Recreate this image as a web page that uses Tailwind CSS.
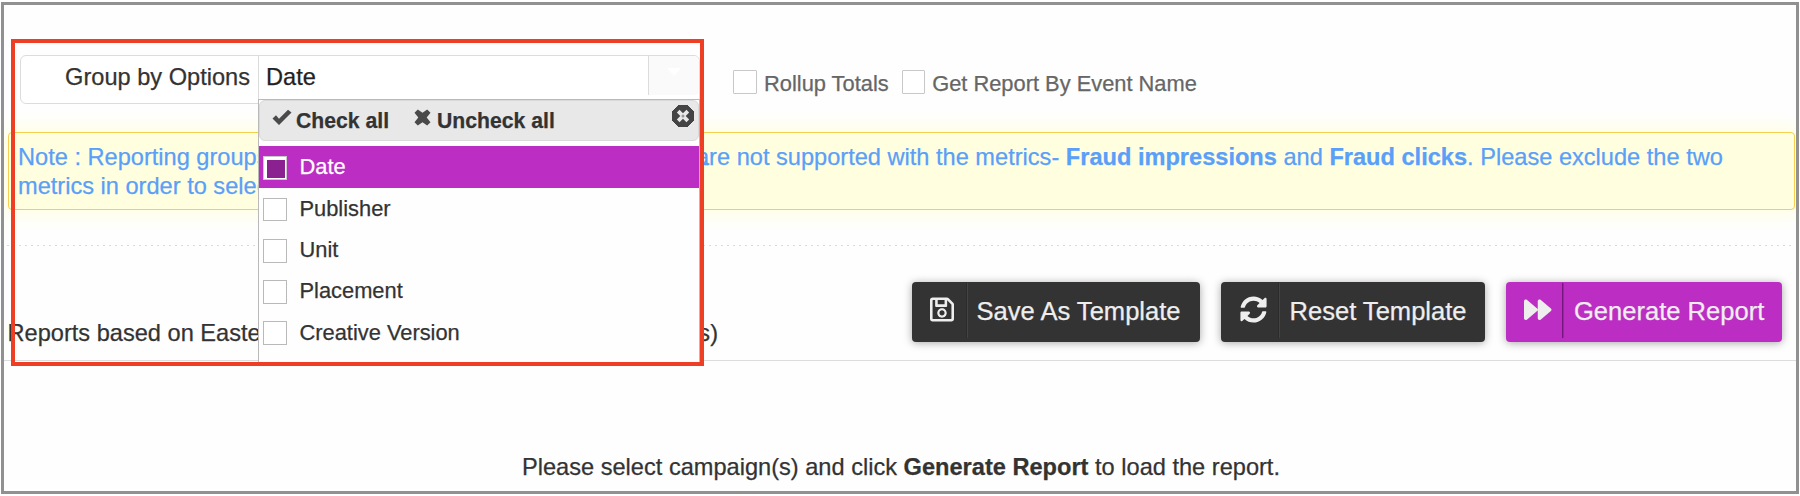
<!DOCTYPE html>
<html lang="en">
<head>
<meta charset="utf-8">
<title>Reports</title>
<script src="https://cdn.jsdelivr.net/npm/@tailwindcss/browser@4"></script>
</head>
<body class="bg-white">
<main class="relative ml-px mt-[2px] h-[492px] w-[1798px] overflow-hidden border-[3px] border-[#919191] bg-[#fefefe] font-['Liberation_Sans',Arial,sans-serif] text-[23.6px] leading-[29px] text-[#333] [-webkit-text-stroke:0.25px]">

  <!-- Toolbar -->
  <section class="flex h-[127px] items-start pl-4 pt-[50px]">
    <div class="flex h-[49px] w-[680px] shrink-0 overflow-hidden rounded-[6px] border border-[#dcdcdc] bg-white leading-[42px]">
      <div class="w-[238px] border-r border-[#dcdcdc] pr-[8px] text-right">Group by Options</div>
      <div class="flex-1 pl-[7px] text-[#222]">Date</div>
      <div class="flex h-[39px] w-[51px] justify-center rounded-r-[4px] border-l border-[#dcdcdc] bg-[#fafafa] pt-[12px]">
        <svg class="h-[8px] w-[14px]" viewBox="0 0 14 8" fill="#fff"><path d="M0 0h14L7 8z"/></svg>
      </div>
    </div>
    <div class="ml-[33px] mt-[15px] flex items-start text-[21.85px] leading-[27px] text-[#666]">
      <span class="size-6 rounded-[1px] border border-[#c8c8c8] bg-white"></span>
      <span class="ml-[7px] whitespace-nowrap">Rollup Totals</span>
      <span class="ml-[13.5px] h-6 w-[23px] rounded-[1px] border border-[#c8c8c8] bg-white"></span>
      <span class="ml-[7px] whitespace-nowrap">Get Report By Event Name</span>
    </div>
  </section>

  <!-- Note -->
  <section class="ml-1 h-[78px] w-[1787px] rounded-[4px] border border-[#f7cf4f] bg-[#fffedf] pl-[9px] pt-[10px] text-[#5a9ff8] shadow-[0_0_16px_6px_#fffee3]">
    <p class="whitespace-nowrap"><span class="inline-block w-[678px] align-top">Note : Reporting groups by Cost Model, Device type and Site URL</span>are not supported with the metrics- <b>Fraud impressions</b> and <b>Fraud clicks</b>. Please exclude the two</p>
    <p>metrics in order to select the group.</p>
  </section>

  <div class="ml-[3px] mt-[35px] h-px w-[1788px] bg-[repeating-linear-gradient(90deg,#dadada_0_2px,transparent_2px_6px)]"></div>

  <!-- Actions -->
  <section class="flex h-[115px] items-start border-b border-[#dcdcdc] pl-[3.5px] pr-[14px] pt-9">
    <div class="mt-[37px] flex w-[710.5px] justify-between whitespace-nowrap"><span>Reports based on Eastern Time Zone</span><span>(UTC -5 hours)</span></div>
    <div class="ml-auto flex gap-[21px] text-[25.55px] leading-[58px] text-[#eee]">
      <button class="flex h-[60px] w-[288px] items-start whitespace-nowrap rounded-[4px] bg-[#333] shadow-[0_1px_9px_rgba(0,0,0,0.35)]">
        <span class="mt-px flex h-[55px] w-[55px] border-r border-[#2a2a2a] pl-[18px] pt-[14px]"><svg class="h-[25px] w-6" viewBox="0 32 448 448" fill="#eee"><path d="M433.941 129.941l-83.882-83.882A48 48 0 0 0 316.118 32H48C21.49 32 0 53.49 0 80v352c0 26.51 21.49 48 48 48h352c26.51 0 48-21.49 48-48V163.882a48 48 0 0 0-14.059-33.941zM272 80v80H144V80h128zm122 352H54a6 6 0 0 1-6-6V86a6 6 0 0 1 6-6h42v104c0 13.255 10.745 24 24 24h176c13.255 0 24-10.745 24-24V83.882l78.243 78.243a6 6 0 0 1 1.757 4.243V426a6 6 0 0 1-6 6zM224 232c-48.523 0-88 39.477-88 88s39.477 88 88 88 88-39.477 88-88-39.477-88-88-88zm0 136c-26.467 0-48-21.533-48-48s21.533-48 48-48 48 21.533 48 48-21.533 48-48 48z"/></svg></span>
        <span class="mt-px h-[55px] w-px bg-[#444]"></span>
        <span class="ml-[8.5px]">Save As Template</span>
      </button>
      <button class="flex h-[60px] w-[264px] items-start whitespace-nowrap rounded-[4px] bg-[#333] shadow-[0_1px_9px_rgba(0,0,0,0.35)]">
        <span class="mt-px flex h-[55px] w-[58px] border-r border-[#2a2a2a] pl-[18.5px] pt-[13px]"><svg class="size-[27px]" viewBox="0 0 512 512" fill="#eee"><path d="M370.72 133.28C339.458 104.008 298.888 87.962 255.848 88c-77.458.068-144.328 53.178-162.791 126.85-1.344 5.363-6.122 9.15-11.651 9.15H24.103c-7.498 0-13.194-6.807-11.807-14.176C33.933 94.924 134.813 8 256 8c66.448 0 126.791 26.136 171.315 68.685L463.03 40.97C478.149 25.851 504 36.559 504 57.941V192c0 13.255-10.745 24-24 24H345.941c-21.382 0-32.09-25.851-16.971-40.971l41.75-41.749zM32 296h134.059c21.382 0 32.09 25.851 16.971 40.971l-41.75 41.75c31.262 29.273 71.835 45.319 114.876 45.28 77.418-.07 144.315-53.144 162.787-126.849 1.344-5.363 6.122-9.15 11.651-9.15h57.304c7.498 0 13.194 6.807 11.807 14.176C478.067 417.076 377.187 504 256 504c-66.448 0-126.791-26.136-171.315-68.685L48.97 471.03C33.851 486.149 8 475.441 8 454.059V320c0-13.255 10.745-24 24-24z"/></svg></span>
        <span class="mt-px h-[55px] w-px bg-[#444]"></span>
        <span class="ml-[9.5px]">Reset Template</span>
      </button>
      <button class="flex h-[60px] w-[276px] items-start whitespace-nowrap rounded-[4px] bg-[#bc2dc3] shadow-[0_1px_9px_rgba(0,0,0,0.35)]">
        <span class="mt-px flex h-[55px] w-[57px] border-r border-[#75187b] pl-[18px] pt-[13px]"><svg class="size-[27.5px]" viewBox="0 0 512 512" fill="#eee"><path d="M500.5 231.4l-192-160C287.9 54.3 256 68.6 256 96v320c0 27.4 31.9 41.8 52.5 24.6l192-160c15.3-12.8 15.3-36.4 0-49.2zm-256 0l-192-160C31.9 54.3 0 68.6 0 96v320c0 27.4 31.9 41.8 52.5 24.6l192-160c15.3-12.8 15.3-36.4 0-49.2z"/></svg></span>
        <span class="mt-px h-[55px] w-px bg-[#9a25a0]"></span>
        <span class="ml-[10px]">Generate Report</span>
      </button>
    </div>
  </section>

  <p class="pl-[2px] pt-[92px] text-center">Please select campaign(s) and click <b>Generate Report</b> to load the report.</p>

  <!-- Open drop-down of the grouping field -->
  <div class="absolute left-[254px] top-[94px] h-[264px] w-[442px] border border-b-0 border-[#b9b9b9] bg-[#fefefe]">
    <div class="flex h-[41px] items-start rounded-[6px] border border-[#d9d9d9] bg-[#e8e8e8] pt-[5px] text-[21.2px] font-bold">
      <svg class="ml-[12px] mt-[3px] h-[17px] w-[20px]" viewBox="0 0 20 17"><path d="M.5 9.5L4 6.3l3 3.4L16 .8l3.500 2.600L7 16z" fill="#4a4a4a"/></svg>
      <span class="ml-[4px]">Check all</span>
      <svg class="ml-[24.500px] mt-[2.500px] h-[17px] w-[17px]" viewBox="0 0 17 17"><path d="M.5 3.800L3.800.5l4.700 3.300L13.200.5l3.300 3.300-3.800 4.700 3.800 4.700-3.300 3.300-4.700-3.300-4.700 3.300L.5 13.200l3.800-4.700z" fill="#4a4a4a"/></svg>
      <span class="ml-[6.5px]">Uncheck all</span>
      <svg class="ml-auto mr-[4.500px] -mt-px size-[22px]" viewBox="0 0 22 22"><path d="M7 0h8l7 7v8l-7 7H7l-7-7V7z" fill="#444" stroke="#444" stroke-linejoin="round"/><path d="M6.200 6.200l9.600 9.600M15.800 6.200l-9.600 9.600" stroke="#e8e8e8" stroke-width="3.800"/><path d="M11 11h.01" stroke="#999" stroke-width="3" stroke-linecap="round"/></svg>
    </div>
    <ul class="mt-[5px] text-[21.85px] leading-[41px]">
      <li class="flex h-[42px] items-start bg-[#bc2dc3] pl-1 text-white"><span class="mr-[12.5px] mt-[10px] size-6 border border-[#c9c9c9] bg-white p-[3px]"><span class="block size-[18px] bg-[#8b2091]"></span></span>Date</li>
      <li class="flex h-[41px] items-start pl-1"><span class="mr-[12.5px] mt-[10px] h-[23px] w-6 border border-[#b9b9b9] bg-white"></span>Publisher</li>
      <li class="flex h-[41px] items-start pl-1"><span class="mr-[12.5px] mt-[10px] size-6 border border-[#b9b9b9] bg-white"></span>Unit</li>
      <li class="flex h-[41px] items-start pl-1"><span class="mr-[12.5px] mt-[10px] size-6 border border-[#b9b9b9] bg-white"></span>Placement</li>
      <li class="flex h-[41px] items-start pl-1 leading-[43px]"><span class="mr-[12.5px] mt-[10px] size-6 border border-[#b9b9b9] bg-white"></span>Creative Version</li>
    </ul>
  </div>

  <!-- Highlight frame -->
  <div class="absolute left-[7px] top-[34px] h-[327px] w-[693px] border-4 border-[#ee3f24]"></div>
</main>
</body>
</html>
